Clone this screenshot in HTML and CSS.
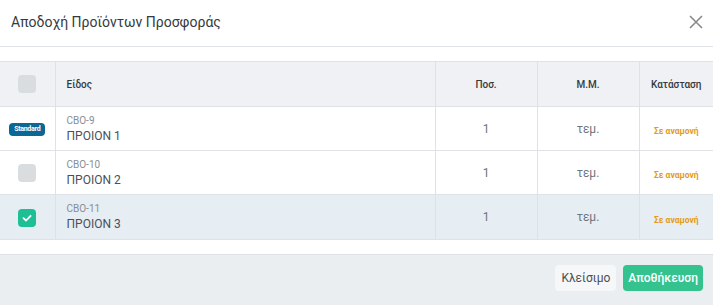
FILE: index.html
```html
<!DOCTYPE html>
<html lang="el">
<head>
<meta charset="utf-8">
<link rel="stylesheet" href="styles.css">
</head>
<body>
<div class="modal">
  <div class="modal-header">
    <h1 class="title">Αποδοχή Προϊόντων Προσφοράς</h1>
    <button class="close" aria-label="close">
      <svg width="14" height="14" viewBox="0 0 14 14"><path d="M1 1L13 13M13 1L1 13" stroke="#8a8a8a" stroke-width="1.6" fill="none"/></svg>
    </button>
  </div>
  <div class="modal-body">
    <table class="grid">
      <thead>
        <tr>
          <th class="c-sel"><span class="chk"></span></th>
          <th class="c-item">Είδος</th>
          <th class="c-qty">Ποσ.</th>
          <th class="c-uom">Μ.Μ.</th>
          <th class="c-status">Κατάσταση</th>
        </tr>
      </thead>
      <tbody>
        <tr>
          <td class="c-sel"><span class="badge">Standard</span></td>
          <td class="c-item"><div class="code">CBO-9</div><div class="name">ΠΡΟΙΟΝ 1</div></td>
          <td class="c-qty">1</td>
          <td class="c-uom">τεμ.</td>
          <td class="c-status"><span class="status">Σε αναμονή</span></td>
        </tr>
        <tr>
          <td class="c-sel"><span class="chk"></span></td>
          <td class="c-item"><div class="code">CBO-10</div><div class="name">ΠΡΟΙΟΝ 2</div></td>
          <td class="c-qty">1</td>
          <td class="c-uom">τεμ.</td>
          <td class="c-status"><span class="status">Σε αναμονή</span></td>
        </tr>
        <tr class="selected">
          <td class="c-sel"><span class="chk on"><svg width="12" height="12" viewBox="0 0 12 12"><path d="M2.5 6.2L5 8.6L9.6 3.8" stroke="#fff" stroke-width="1.8" fill="none" stroke-linecap="round" stroke-linejoin="round"/></svg></span></td>
          <td class="c-item"><div class="code">CBO-11</div><div class="name">ΠΡΟΙΟΝ 3</div></td>
          <td class="c-qty">1</td>
          <td class="c-uom">τεμ.</td>
          <td class="c-status"><span class="status">Σε αναμονή</span></td>
        </tr>
      </tbody>
    </table>
  </div>
  <div class="modal-footer">
    <button class="btn btn-light">Κλείσιμο</button>
    <button class="btn btn-green">Αποθήκευση</button>
  </div>
</div>
</body>
</html>
```
FILE: styles.css
```css
* { box-sizing: border-box; }
html, body { margin: 0; padding: 0; background: #fff; }
body { font-family: Roboto, "Noto Sans", sans-serif; color: #343a40; }
.modal { width: 713px; height: 305px; display: flex; flex-direction: column; }
.modal-header {
  height: 47px;
  display: flex; align-items: center; justify-content: space-between;
  padding: 0 10px 2px 11px;
  border-bottom: 1px solid #dee2e6;
}
.title { margin: 0; font-size: 14px; font-weight: 400; color: #343a40; }
.close { border: 0; background: none; padding: 0; width: 14px; height: 14px; display: flex; }
.modal-body { padding: 14px 0 14px; }
.grid { width: 100%; border-collapse: collapse; table-layout: fixed; }
.grid th, .grid td { border: 1px solid #dee2e6; padding: 0 11px; vertical-align: middle; }
.grid tr > :first-child { border-left: 0; }
.grid tr > :last-child { border-right: 0; }
.grid thead th { background: #f0f1f5; height: 45px; font-size: 10px; font-weight: 500; color: #343a40; }
.grid tbody td { height: 44px; }
.grid tbody tr.selected td { background: #e6edf3; height: 45px; }
.c-sel { width: 55px; text-align: center; padding: 0 !important; }
.c-item { width: 380px; text-align: left; }
.c-qty, .c-uom { width: 102px; text-align: center; font-size: 12px; color: #6c757d; }
.c-status { text-align: center; padding: 0 !important; }
.chk { display: inline-flex; align-items: center; justify-content: center; width: 18px; height: 18px; border-radius: 4px; background: #d9dde0; vertical-align: middle; }
.chk.on { background: #1fbf95; }
.badge { display: inline-block; width: 36px; height: 13px; line-height: 13px; border-radius: 4px; background: #0b6796; color: #fff; font-size: 7px; font-weight: 700; letter-spacing: -0.3px; text-align: center; vertical-align: middle; }
.code { font-size: 10px; color: #888e94; line-height: 14px; }
.name { font-size: 12px; color: #495057; line-height: 16px; }
.status { font-size: 8.5px; font-weight: 700; color: #e39b1c; }
.modal-footer {
  flex: 1;
  background: #ebeef0;
  border-top: 1px solid #dde1e5;
  display: flex; justify-content: flex-end; align-items: center; gap: 7px;
  padding: 0 10px 4px;
}
.btn { border: 0; border-radius: 4px; height: 26px; padding: 0 6px; font-family: Roboto, "Noto Sans", sans-serif; font-size: 12px; }
.btn-light { background: #f5f7f8; color: #495057; }
.btn-green { background: #34c38f; color: #fff; font-weight: 500; padding: 0 5px; }
```
